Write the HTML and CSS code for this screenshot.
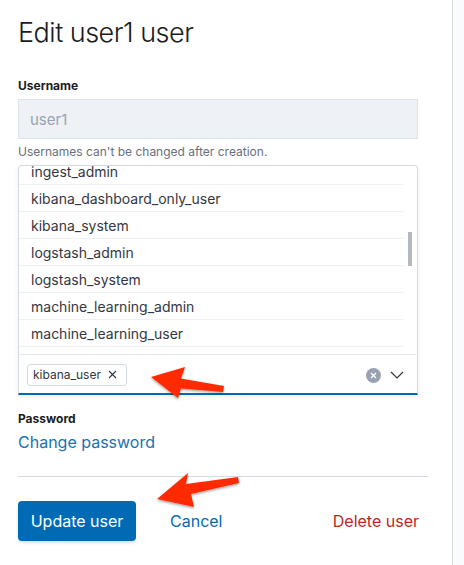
FILE: index.html
```html
<!DOCTYPE html>
<html>
<head>
<meta charset="utf-8">
<link rel="stylesheet" href="styles.css">
</head>
<body>
<div class="page">
  <main class="panel">
    <h1 class="title">Edit user1 user</h1>

    <div class="field">
      <label class="label">Username</label>
      <div class="input-disabled">user1</div>
      <div class="help">Usernames can't be changed after creation.</div>
    </div>

    <div class="combo">
      <div class="listbox">
        <div class="list">
          <div class="list-inner">
            <div class="opt">ingest_admin</div>
            <div class="opt">kibana_dashboard_only_user</div>
            <div class="opt">kibana_system</div>
            <div class="opt">logstash_admin</div>
            <div class="opt">logstash_system</div>
            <div class="opt">machine_learning_admin</div>
            <div class="opt">machine_learning_user</div>
          </div>
        </div>
        <div class="track"><div class="thumb"></div></div>
      </div>
      <div class="combo-input">
        <span class="tag">kibana_user <span class="tag-x">
          <svg width="9" height="9" viewBox="0 0 9 9"><path d="M1 1L8 8M8 1L1 8" stroke="#343741" stroke-width="1.1" fill="none"/></svg>
        </span></span>
        <span class="spacer"></span>
        <span class="clear">
          <svg width="15" height="15" viewBox="0 0 15 15"><circle cx="7.5" cy="7.5" r="7.5" fill="#98a2b3"/><path d="M5 5L10 10M10 5L5 10" stroke="#fff" stroke-width="1.3" fill="none"/></svg>
        </span>
        <span class="chev">
          <svg width="14" height="8" viewBox="0 0 14 8"><path d="M1 1L7 7L13 1" stroke="#343741" stroke-width="1.2" fill="none"/></svg>
        </span>
      </div>
    </div>

    <div class="field pw">
      <label class="label">Password</label>
      <a class="link">Change password</a>
    </div>

    <hr class="rule">

    <div class="actions">
      <button class="btn-primary">Update user</button>
      <button class="btn-empty">Cancel</button>
      <span class="grow"></span>
      <button class="btn-danger">Delete user</button>
    </div>
  </main>

  <svg class="arrows" width="464" height="565" viewBox="0 0 464 565">
    <defs>
      <filter id="sh" x="-20%" y="-20%" width="140%" height="160%">
        <feDropShadow dx="0" dy="1.5" stdDeviation="1.2" flood-color="#000" flood-opacity="0.35"/>
      </filter>
    </defs>
    <polygon filter="url(#sh)" fill="#ff2b06" points="151,377 185,367 181,378.5 224,386 223,392 181,388.5 178,398"/>
    <polygon filter="url(#sh)" fill="#ff2b06" points="157,499 188,473 186,484 238,477 239,483 191,494 194,507"/>
  </svg>
</div>
</body>
</html>
```

FILE: styles.css
```css
* { box-sizing: border-box; }
html, body { margin: 0; padding: 0; }
body {
  background: #fafbfd;
  font-family: Inter, "Noto Sans", sans-serif;
  color: #343741;
  width: 464px;
  height: 565px;
  overflow: hidden;
}
.page {
  position: relative;
  width: 464px;
  height: 565px;
}
.panel {
  width: 453px;
  height: 565px;
  background: #fff;
  border-right: 1px solid #d3dae6;
  padding: 15px 24px 0 18px;
  display: flex;
  flex-direction: column;
}
.title {
  margin: 0;
  font-size: 27px;
  line-height: 35px;
  font-weight: 300;
  color: #1a1c21;
  letter-spacing: -0.5px;
}
.field {
  width: 400px;
  display: flex;
  flex-direction: column;
}
.field:first-of-type { margin-top: 27px; }
.label {
  font-size: 12px;
  line-height: 18px;
  font-weight: 700;
  color: #1a1c21;
}
.input-disabled {
  margin-top: 4px;
  height: 40px;
  background: #eef2f7;
  border: 1px solid #dde3ec;
  padding: 0 11px;
  display: flex;
  align-items: center;
  font-size: 15px;
  color: #98a2b3;
}
.help {
  margin-top: 4px;
  font-size: 12px;
  line-height: 18px;
  color: #69707d;
}
.combo {
  width: 400px;
  margin-top: 4px;
  display: flex;
  flex-direction: column;
  box-shadow: 0 2px 6px rgba(0,0,0,0.06);
}
.listbox {
  height: 189px;
  border: 1px solid #d3dae6;
  border-bottom: none;
  border-radius: 4px 4px 0 0;
  display: flex;
  overflow: hidden;
  background: #fff;
}
.list {
  flex: 1;
  overflow: hidden;
}
.list-inner {
  margin-top: -8px;
}
.opt {
  height: 27px;
  line-height: 27px;
  font-size: 14px;
  padding-left: 12px;
  color: #343741;
  border-bottom: 1px solid #eef2f7;
  white-space: nowrap;
}
.track {
  width: 14px;
  padding: 66px 0 0 5px;
}
.thumb {
  width: 4px;
  height: 34px;
  background: #b4b8bf;
}
.combo-input {
  height: 41px;
  border: 1px solid #d3dae6;
  border-top: 1px solid #e4e9f0;
  border-bottom: 2px solid #006bb4;
  background: #fff;
  display: flex;
  align-items: center;
  padding: 0 13px 0 8px;
}
.tag {
  height: 22px;
  border: 1px solid #d3dae6;
  border-radius: 3px;
  padding: 0 9px 0 5px;
  display: inline-flex;
  align-items: center;
  font-size: 12px;
  color: #343741;
  margin-top: 1px;
}
.tag-x {
  display: inline-flex;
  margin-left: 7px;
}
.spacer { flex: 1; }
.clear { display: inline-flex; margin-right: 9px; margin-top: 2px; }
.chev { display: inline-flex; margin-top: 1px; }
.pw { margin-top: 15px; }
.link {
  margin-top: 2px;
  font-size: 16px;
  line-height: 24px;
  color: #1a72b0;
}
.rule {
  width: 410px;
  margin: 22px 0 0 0;
  border: none;
  border-top: 1px solid #d3dae6;
  height: 0;
}
.actions {
  width: 401px;
  margin-top: 24px;
  display: flex;
  align-items: center;
}
.actions button {
  font-family: Inter, "Noto Sans", sans-serif;
  font-size: 16px;
  border: none;
  background: none;
  cursor: pointer;
  height: 40px;
  padding: 0;
}
.btn-primary {
  width: 118px;
  background: #006bb4 !important;
  color: #fff;
  border-radius: 4px;
  box-shadow: 0 2px 3px rgba(0,0,0,0.12);
}
.btn-empty {
  color: #006bb4;
  margin-left: 34px;
}
.grow { flex: 1; }
.btn-danger { color: #bd271e; }
.arrows {
  position: absolute;
  left: 0;
  top: 0;
  pointer-events: none;
}
```
